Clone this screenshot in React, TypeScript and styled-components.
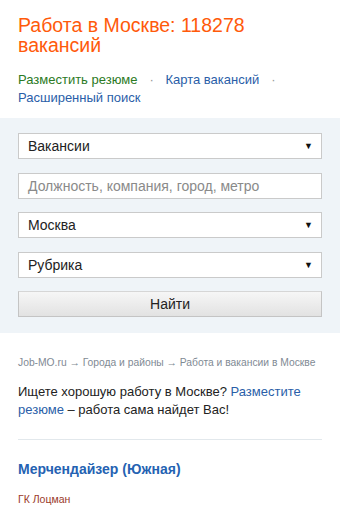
import React from 'react';
import styled, { createGlobalStyle } from 'styled-components';

const GlobalStyle = createGlobalStyle`
  html, body {
    margin: 0;
    padding: 0;
    background: #fff;
    font-family: "Liberation Sans", Arial, sans-serif;
  }
`;

const Page = styled.div`
  width: 340px;
  overflow: hidden;
`;

const Header = styled.header`
  padding: 15px 18px 0;
`;

const Title = styled.h1`
  margin: 0;
  font-size: 19.5px;
  line-height: 20px;
  font-weight: normal;
  color: #ff5a0a;
`;

const Links = styled.div`
  margin-top: 16px;
  font-size: 13px;
  line-height: 18px;
`;

const Link = styled.a<{ $green?: boolean }>`
  color: ${(p) => (p.$green ? '#2b7a24' : '#2a5ea8')};
  text-decoration: none;
`;

const NavLink = styled(Link)`
  white-space: nowrap;
`;

const Dot = styled.span`
  color: #999;
  margin: 0 8px 0 12px;
`;

const SearchPanel = styled.form`
  margin-top: 11px;
  background: #eff4f8;
  padding: 15px 18px 16px;
  display: flex;
  flex-direction: column;
  gap: 13.5px;
`;

const Field = styled.div`
  box-sizing: border-box;
  height: 26px;
  background: #fff;
  border: 1px solid #cacaca;
  display: flex;
  align-items: center;
  justify-content: space-between;
  padding: 0 8px 0 9px;
  font-size: 14px;
  color: #222;
`;

const Placeholder = styled.span`
  color: #8a8a8a;
`;

const Arrow = styled.span`
  font-size: 9px;
  color: #111;
`;

const Button = styled.button`
  box-sizing: border-box;
  height: 26px;
  border: 1px solid #c4c4c4;
  border-top-color: #d6d6d6;
  background: linear-gradient(#f6f6f6, #e2e2e2);
  font-family: inherit;
  font-size: 14px;
  color: #222;
  padding: 0;
`;

const Content = styled.section`
  padding: 23px 18px 0;
`;

const Crumbs = styled.div`
  font-size: 10.3px;
  color: #7f8a94;
  line-height: 14px;
  white-space: nowrap;
`;

const Intro = styled.p`
  margin: 13px 0 0;
  font-size: 13px;
  line-height: 18px;
  color: #222;
`;

const Divider = styled.hr`
  margin: 20px 0 0;
  border: 0;
  border-top: 1px solid #e2e8ec;
`;

const JobTitle = styled.a`
  display: block;
  margin-top: 21px;
  font-size: 14px;
  line-height: 17px;
  font-weight: bold;
  color: #2462b2;
  text-decoration: none;
`;

const Company = styled.div`
  margin-top: 15px;
  font-size: 10.5px;
  line-height: 12px;
  color: #9a3a2a;
  padding-bottom: 8px;
  border-bottom: 1px solid #eee;
`;

export default function App() {
  return (
    <Page>
      <GlobalStyle />
      <Header>
        <Title>Работа в Москве: 118278 вакансий</Title>
        <Links>
          <NavLink $green href="#">Разместить резюме</NavLink>
          <Dot>·</Dot> <NavLink href="#">Карта вакансий</NavLink>
          <Dot>·</Dot> <NavLink href="#">Расширенный поиск</NavLink>
        </Links>
      </Header>
      <SearchPanel>
        <Field>
          Вакансии <Arrow>▼</Arrow>
        </Field>
        <Field>
          <Placeholder>Должность, компания, город, метро</Placeholder>
        </Field>
        <Field>
          Москва <Arrow>▼</Arrow>
        </Field>
        <Field>
          Рубрика <Arrow>▼</Arrow>
        </Field>
        <Button type="button">Найти</Button>
      </SearchPanel>
      <Content>
        <Crumbs>Job-MO.ru → Города и районы → Работа и вакансии в Москве</Crumbs>
        <Intro>
          Ищете хорошую работу в Москве? <Link href="#">Разместите резюме</Link> – работа сама найдет Вас!
        </Intro>
        <Divider />
        <JobTitle href="#">Мерчендайзер (Южная)</JobTitle>
        <Company>ГК Лоцман</Company>
      </Content>
    </Page>
  );
}
